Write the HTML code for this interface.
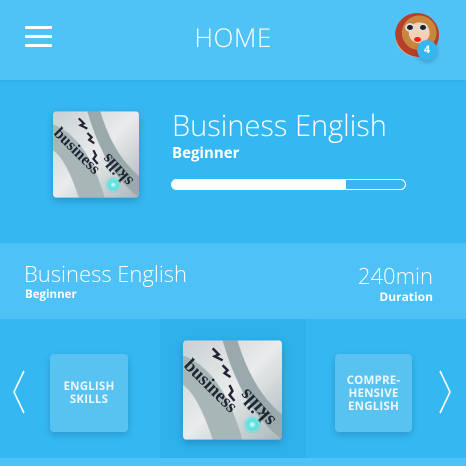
<!DOCTYPE html>
<html><head><meta charset="utf-8"><style>
*{margin:0;padding:0;box-sizing:border-box}
body{width:466px;height:466px;overflow:hidden;background:#35b8f2;font-family:"Open Sans","Liberation Sans",sans-serif;color:#fff;position:relative}
.abs{position:absolute}
.hdr{left:0;top:0;width:466px;height:80px;background:#4fc2f6;box-shadow:0 1px 3px rgba(0,0,0,.08)}
.ham{left:25px;width:27px;height:3px;background:#fff;border-radius:1px}
.band{left:0;top:243px;width:466px;height:76px;background:#4ec1f6}
.car{left:0;top:319px;width:466px;height:139px;background:#35b8f2}
.ctr{left:160px;top:319px;width:146px;height:139px;background:#2fb1ec}
.bot{left:0;top:458px;width:466px;height:8px;background:#4ec1f6}
.card{border-radius:4px;overflow:hidden;box-shadow:0 3px 8px rgba(0,40,80,.25)}
.side{background:#5cc4f1;opacity:.9;display:flex;align-items:center;justify-content:center;text-align:center;font-weight:bold;font-size:11.5px;line-height:13px;letter-spacing:.2px}
</style></head><body>
<svg width="0" height="0" style="position:absolute"><defs>
<linearGradient id="g" x1="0" y1="0" x2="1" y2="1"><stop offset="0" stop-color="#c8d0d2"/><stop offset=".5" stop-color="#e9ebec"/><stop offset="1" stop-color="#aab6b8"/></linearGradient>
<radialGradient id="gl" cx=".5" cy=".5" r=".5"><stop offset="0" stop-color="#e0ffff"/><stop offset=".4" stop-color="#4fe3e3"/><stop offset="1" stop-color="#4fe3e3" stop-opacity="0"/></radialGradient>
<symbol id="gear" viewBox="0 0 100 100">
<rect width="100" height="100" fill="url(#g)"/>
<path d="M0 15 Q40 30 60 100 L30 100 Q15 55 0 45Z" fill="#a9b6b8"/>
<path d="M55 0 Q70 50 100 75 L100 100 Q60 70 40 0Z" fill="#9aa9ab"/>
<path d="M30 8 l6 6 -4 2 8 4 M40 25 l5 5 -3 3 6 4 M47 45 l3 6 -3 4 5 6" stroke="#223" stroke-width="2.5" fill="none"/>
<text x="0" y="0" transform="translate(0,26) rotate(45)" font-family="Liberation Serif,serif" font-weight="bold" font-size="19" fill="#1d2633">business</text>
<text x="0" y="0" transform="translate(94,80) rotate(228)" font-family="Liberation Serif,serif" font-weight="bold" font-size="20" fill="#1d2633">skills</text>
<circle cx="70" cy="85" r="10" fill="url(#gl)"/>
</symbol></defs></svg>

<div class="abs hdr"></div>
<div class="abs ham" style="top:26px"></div>
<div class="abs ham" style="top:35px"></div>
<div class="abs ham" style="top:44px"></div>
<div class="abs" style="left:0;width:466px;top:20px;text-align:center;font-size:26px;line-height:34px;font-weight:300;letter-spacing:.5px">HOME</div>
<div class="abs" style="left:395px;top:13px;width:44px;height:44px;border-radius:50%;overflow:hidden;background:radial-gradient(circle at 55% 45%,#f3d2b8 0 30%,#c9863e 31% 50%,#b4402a 51% 70%,#e6b27a 71%)">
<div class="abs" style="left:10px;top:10px;width:10px;height:9px;border-radius:50%;background:#222;border:2px solid #ddd"></div>
<div class="abs" style="left:23px;top:10px;width:10px;height:9px;border-radius:50%;background:#222;border:2px solid #ddd"></div>
<div class="abs" style="left:19px;top:24px;width:7px;height:5px;border-radius:50%;background:#e22"></div>
</div>
<div class="abs" style="left:417px;top:40px;width:20px;height:20px;border-radius:50%;background:#37b6ef;box-shadow:0 2px 5px rgba(0,0,0,.2);font-size:11px;font-weight:bold;text-align:center;line-height:20px">4</div>

<svg class="abs card" style="left:53px;top:111px" width="86" height="87"><use href="#gear" width="86" height="87"/></svg>
<div class="abs" style="left:172px;top:106px;font-size:29px;line-height:40px;font-weight:300;white-space:nowrap">Business English</div>
<div class="abs" style="left:172px;top:143px;font-size:15px;font-weight:bold">Beginner</div>
<div class="abs" style="left:171px;top:179px;width:235px;height:11px;border:1.5px solid #fff;border-radius:6px;overflow:hidden"><div style="width:174px;height:100%;background:#fff"></div></div>

<div class="abs band"></div>
<div class="abs" style="left:24px;top:259px;font-size:22px;line-height:30px;font-weight:300;white-space:nowrap">Business English</div>
<div class="abs" style="left:25px;top:287px;font-size:11.5px;font-weight:bold">Beginner</div>
<div class="abs" style="right:33px;top:261px;font-size:22px;line-height:30px;font-weight:300">240min</div>
<div class="abs" style="right:33px;top:288px;font-size:12px;font-weight:bold">Duration</div>

<div class="abs car"></div>
<div class="abs ctr"></div>
<div class="abs bot"></div>
<svg class="abs" style="left:12px;top:369px" width="14" height="46"><path d="M12 2 L2 23 L12 44" stroke="#fff" stroke-width="1.6" fill="none"/></svg>
<svg class="abs" style="left:438px;top:369px" width="14" height="46"><path d="M2 2 L12 23 L2 44" stroke="#fff" stroke-width="1.6" fill="none"/></svg>
<div class="abs card side" style="left:50px;top:354px;width:78px;height:78px">ENGLISH<br>SKILLS</div>
<div class="abs card side" style="left:335px;top:354px;width:77px;height:78px">COMPRE-<br>HENSIVE<br>ENGLISH</div>
<svg class="abs card" style="left:183px;top:340px" width="99" height="100"><use href="#gear" width="99" height="100"/></svg>
</body></html>
